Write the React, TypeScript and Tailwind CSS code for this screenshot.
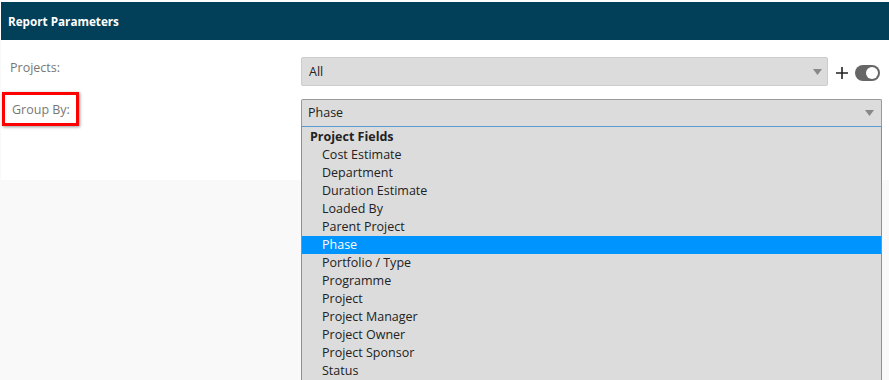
import React from "react";

const items = [
  "Cost Estimate",
  "Department",
  "Duration Estimate",
  "Loaded By",
  "Parent Project",
  "Phase",
  "Portfolio / Type",
  "Programme",
  "Project",
  "Project Manager",
  "Project Owner",
  "Project Sponsor",
  "Status",
];

function Caret() {
  return (
    <svg width="9" height="6" viewBox="0 0 9 6">
      <path d="M0 0 L9 0 L4.5 6 Z" fill="#888" />
    </svg>
  );
}

export default function App() {
  return (
    <div
      className="w-[889px] h-[380px] bg-[#f9f9f9] overflow-hidden text-[12.5px]"
      style={{ fontFamily: '"Open Sans", "Noto Sans", sans-serif' }}
    >
      <div className="pt-[2px] pl-[1px] bg-white">
        <div className="h-[38px] bg-[#02405a] text-white font-bold text-[11.7px] flex items-center pl-[7px] pt-[1px]">
          Report Parameters
        </div>
      </div>
      <div className="relative h-[140px] bg-white ml-[1px]">
        <div className="flex items-start pt-[18px]">
          <div className="w-[300px] pl-[9px] text-[#777] leading-[18px] pt-[1px]">Projects:</div>
          <div className="w-[527px] h-[29px] bg-[#dcdcdc] border border-[#cccccc] rounded-[2px] flex items-center justify-between pl-[7px] pr-[5px] text-[#222] mt-[-1px]">
            <span className="pt-[1px]">All</span>
            <Caret />
          </div>
          <div className="flex items-center h-[29px] ml-[7px] gap-[6px]">
            <svg width="14" height="14" viewBox="0 0 14 14">
              <path d="M7 1 V13 M1 7 H13" stroke="#222" strokeWidth="1.6" />
            </svg>
            <div className="w-[25px] h-[16px] rounded-full bg-[#666] flex items-center justify-end pr-[2px]">
              <div className="w-[12px] h-[12px] rounded-full bg-white" />
            </div>
          </div>
        </div>
        <div className="flex items-start mt-[12px]">
          <div className="w-[300px] pl-[1px]">
            <div className="w-[77px] h-[34px] border-[3px] border-[#ff0000] shadow-[1px_1px_3px_rgba(0,0,0,0.4)] flex items-center pl-[7px] pt-[2px] text-[#777] mt-[-7px]">
              Group By:
            </div>
          </div>
          <div className="relative w-[581px]">
            <div className="h-[27px] bg-[#dcdcdc] border border-[#999] border-b-0 rounded-t-[2px] flex items-center justify-between pl-[6px] pr-[7px] text-[#222]">
              <span className="pt-[1px]">Phase</span>
              <Caret />
            </div>
            <div className="absolute left-0 top-[27px] w-[581px] bg-[#dcdcdc] border border-[#5a9bd5] text-[#222] leading-[18px] pb-[1px]">
              <div className="font-bold pl-[8px] pt-[1px]">Project Fields</div>
              {items.map((it) => (
                <div
                  key={it}
                  className={
                    it === "Phase"
                      ? "pl-[20px] bg-[#0094ff] text-white"
                      : "pl-[20px]"
                  }
                >
                  {it}
                </div>
              ))}
            </div>
          </div>
        </div>
      </div>
    </div>
  );
}
